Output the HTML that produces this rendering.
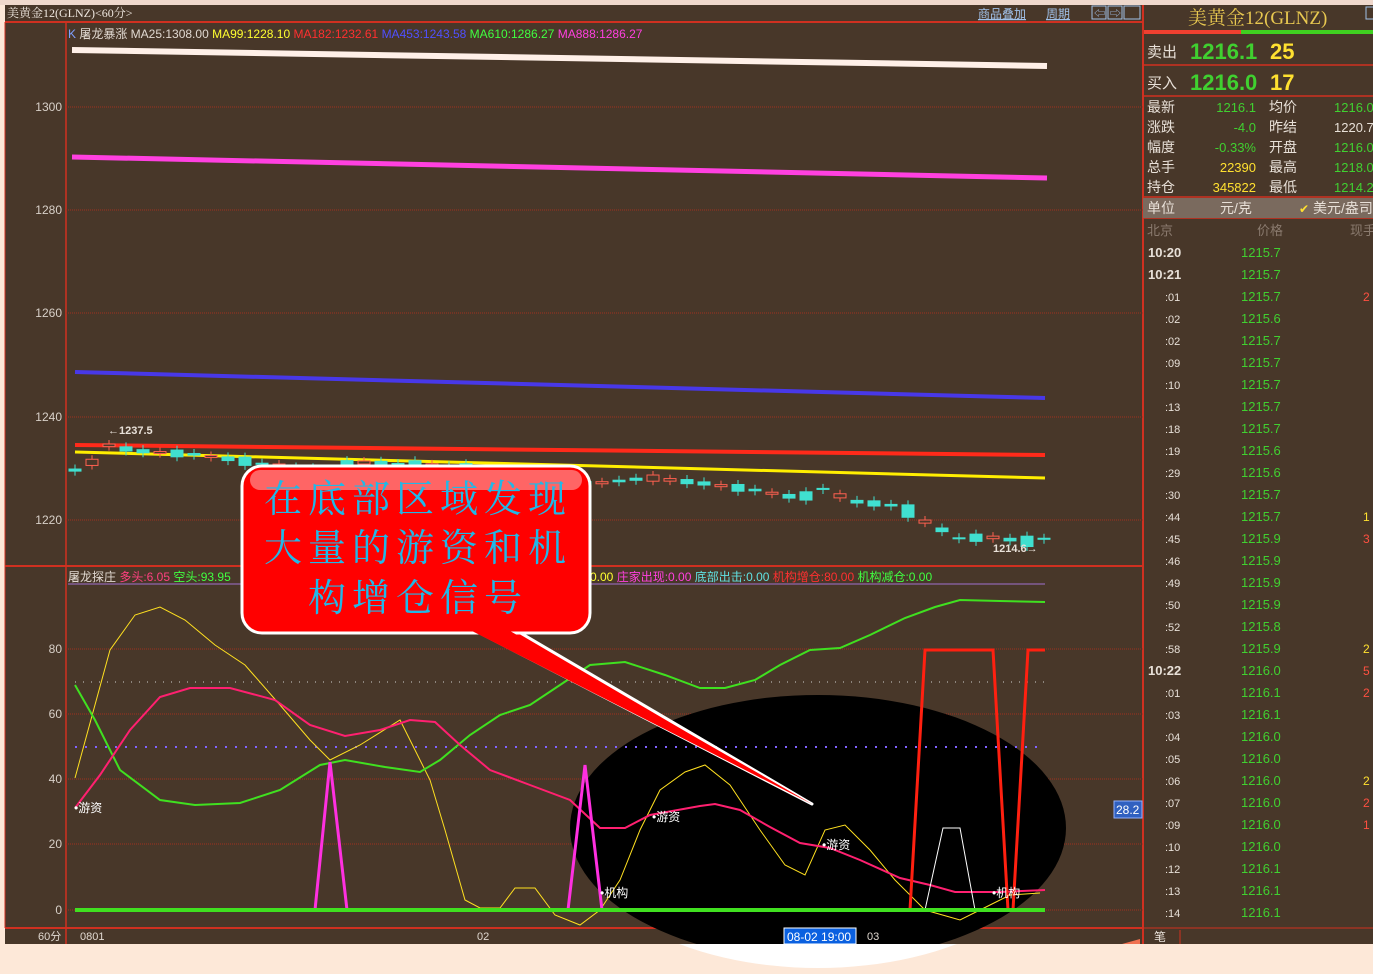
<!DOCTYPE html>
<html><head><meta charset="utf-8">
<style>
html,body{margin:0;padding:0;background:#fde8d8;}
svg{display:block;font-family:"Liberation Sans","Noto Sans CJK SC",sans-serif;}
</style></head>
<body>
<svg id="s" width="1373" height="974" viewBox="0 0 1373 974" xmlns="http://www.w3.org/2000/svg">
<rect width="1373" height="974" fill="#fde8d8"/>
<rect x="0" y="0" width="1373" height="5" fill="#efd8cc"/>
<rect x="5" y="5" width="1368" height="939" fill="#483729"/>
<line x1="5" y1="22" x2="1143" y2="22" stroke="#d03020" stroke-width="2"/>
<line x1="66" y1="22" x2="66" y2="944" stroke="#d03020" stroke-width="1.5"/>
<line x1="1143" y1="5" x2="1143" y2="944" stroke="#d03020" stroke-width="2"/>
<line x1="5" y1="566" x2="1143" y2="566" stroke="#d03020" stroke-width="2"/>
<line x1="5" y1="928" x2="1143" y2="928" stroke="#d03020" stroke-width="2"/>
<line x1="5" y1="22" x2="5" y2="928" stroke="#d03020" stroke-width="1"/>
<text x="7" y="17" font-size="12" fill="#f0e8e0" font-family="Liberation Serif,'Noto Serif CJK SC',serif">美黄金12(GLNZ)&lt;60分&gt;</text>
<g font-size="12" fill="#a0c0e8" text-decoration="underline">
<text x="978" y="18">商品叠加</text><text x="1046" y="18">周期</text></g>
<g fill="none" stroke="#a0c0e8"><rect x="1092" y="6" width="14" height="13"/><rect x="1108" y="6" width="14" height="13"/><rect x="1124" y="6" width="16" height="13"/></g>
<g font-size="11" fill="#a0c0e8"><text x="1094" y="17">⇦</text><text x="1110" y="17">⇨</text></g>
<g font-size="12"><text x="68" y="38"><tspan fill="#80a0ff">K</tspan><tspan fill="#e0d8d0">  屠龙暴涨 MA25:1308.00 </tspan><tspan fill="#ffff30">MA99:1228.10 </tspan><tspan fill="#ff3030">MA182:1232.61 </tspan><tspan fill="#5050ff">MA453:1243.58 </tspan><tspan fill="#40ff40">MA610:1286.27 </tspan><tspan fill="#ff40e0">MA888:1286.27</tspan></text></g>
<g stroke="#a03020" stroke-width="1" stroke-dasharray="1,1">
<line x1="66" y1="107" x2="1143" y2="107"/><line x1="66" y1="210" x2="1143" y2="210"/><line x1="66" y1="313" x2="1143" y2="313"/><line x1="66" y1="417" x2="1143" y2="417"/><line x1="66" y1="520" x2="1143" y2="520"/>
<line x1="66" y1="649" x2="1143" y2="649"/><line x1="66" y1="714" x2="1143" y2="714"/><line x1="66" y1="779" x2="1143" y2="779"/><line x1="66" y1="844" x2="1143" y2="844"/><line x1="66" y1="910" x2="1143" y2="910"/>
</g>
<g font-size="12" fill="#d8d0c8" text-anchor="end">
<text x="62" y="111">1300</text><text x="62" y="214">1280</text><text x="62" y="317">1260</text><text x="62" y="421">1240</text><text x="62" y="524">1220</text>
<text x="62" y="653">80</text><text x="62" y="718">60</text><text x="62" y="783">40</text><text x="62" y="848">20</text><text x="62" y="914">0</text>
</g>
<line x1="72" y1="50" x2="1047" y2="66" stroke="#fff0e8" stroke-width="6"/>
<line x1="72" y1="157" x2="1047" y2="178" stroke="#ff40e0" stroke-width="5"/>
<line x1="75" y1="372" x2="1045" y2="398" stroke="#4838e8" stroke-width="4"/>
<line x1="75" y1="445" x2="1045" y2="455" stroke="#ff2a1a" stroke-width="4"/>
<line x1="75" y1="452" x2="1045" y2="478" stroke="#ffee00" stroke-width="3"/>
<g id="candles"></g>
<text x="108" y="434" font-size="11" font-weight="bold" fill="#e8e0d8">←1237.5</text>
<text x="993" y="552" font-size="11" font-weight="bold" fill="#e8e0d8">1214.6→</text>
<g font-size="12"><text x="68" y="581"><tspan fill="#e0d8d0">屠龙探庄 </tspan><tspan fill="#ff4080">多头:6.05 </tspan><tspan fill="#40ff40">空头:93.95</tspan></text>
<text x="590" y="581"><tspan fill="#ffff30">0.00 </tspan><tspan fill="#ff40e0">庄家出现:0.00 </tspan><tspan fill="#60e0e0">底部出击:0.00 </tspan><tspan fill="#ff3030">机构增仓:80.00 </tspan><tspan fill="#40ff40">机构减仓:0.00</tspan></text></g>
<line x1="68" y1="584" x2="1045" y2="584" stroke="#a070d0" stroke-width="1"/>
<defs><clipPath id="cp"><rect x="0" y="0" width="1373" height="944"/></clipPath>
<clipPath id="cp2"><rect x="0" y="944" width="1373" height="30"/></clipPath></defs>
<ellipse cx="818" cy="828" rx="248" ry="133" fill="#000" clip-path="url(#cp)"/>
<ellipse cx="818" cy="828" rx="248" ry="140" fill="#fff" clip-path="url(#cp2)"/>
<line x1="75" y1="682" x2="1045" y2="682" stroke="#d0d0d0" stroke-width="1" stroke-dasharray="1,7"/>
<line x1="75" y1="747" x2="1045" y2="747" stroke="#8060ff" stroke-width="2" stroke-dasharray="2,8"/>
<polyline fill="none" stroke="#ffe020" stroke-width="1" points="75,778 110,650 135,615 160,607 185,620 215,645 245,665 280,705 310,740 330,760 360,745 400,720 430,780 445,830 465,900 480,908 500,908 515,888 535,888 555,915 580,925 600,910 620,880 640,830 660,790 685,772 705,765 730,785 760,830 785,865 805,875 825,830 845,825 870,850 895,880 925,910 960,920 990,905 1010,895 1040,893"/>
<polyline fill="none" stroke="#40e020" stroke-width="2" points="75,685 95,720 120,770 160,800 195,805 240,803 280,790 320,765 345,760 385,767 420,772 440,760 470,735 500,715 530,705 560,685 590,665 625,662 665,675 700,688 725,688 755,680 780,665 810,650 840,648 870,635 905,618 935,607 960,600 1000,601 1045,602"/>
<polyline fill="none" stroke="#ff2070" stroke-width="2" points="75,808 100,775 130,730 160,697 190,688 230,688 275,700 310,725 345,736 380,730 410,720 435,722 460,745 490,770 530,785 570,800 600,828 625,828 650,815 700,806 715,804 740,810 770,827 800,843 830,848 860,860 900,878 930,885 955,892 1000,892 1045,890"/>
<polyline fill="none" stroke="#ff30e0" stroke-width="3" points="315,910 330,762 347,910"/>
<polyline fill="none" stroke="#ff30e0" stroke-width="3" points="568,910 585,765 602,910"/>
<polyline fill="none" stroke="#ffffff" stroke-width="1" points="925,910 943,828 960,828 975,910"/>
<polyline fill="none" stroke="#ff2010" stroke-width="3" points="910,910 925,650 993,650 1008,910 1013,910 1028,650 1045,650"/>
<line x1="75" y1="910" x2="1045" y2="910" stroke="#40e020" stroke-width="4"/>
<g font-size="12" fill="#fff"><text x="74" y="812">•游资</text><text x="652" y="821">•游资</text><text x="822" y="849">•游资</text><text x="600" y="897">•机构</text><text x="992" y="897">•机构</text></g>
<rect x="1114" y="801" width="28" height="17" fill="#3060c0" stroke="#90b0ff"/>
<text x="1116" y="814" font-size="12" fill="#fff">28.2</text>
<polygon points="470,628 512,628 812,804" fill="#ff0000" stroke="#fff" stroke-width="3" stroke-linejoin="round"/>
<rect x="242" y="466" width="348" height="167" rx="20" fill="#ff0000" stroke="#fff" stroke-width="3"/>
<rect x="250" y="470" width="332" height="20" rx="10" fill="#ff9090" opacity="0.7"/>
<polygon points="472,631 510,631 812,804" fill="#ff0000"/>
<g font-size="38" fill="#20b8e8" text-anchor="middle" font-family="'Noto Serif CJK SC',serif" letter-spacing="6">
<text x="418" y="512">在底部区域发现</text><text x="418" y="561">大量的游资和机</text><text x="418" y="611">构增仓信号</text></g>
<g font-size="11" fill="#e0d8d0"><text x="38" y="940">60分</text><text x="80" y="940">0801</text><text x="477" y="940">02</text><text x="867" y="940">03</text></g>
<rect x="784" y="928" width="72" height="16" fill="#0a60e0" stroke="#fff"/>
<text x="787" y="941" font-size="12" fill="#fff">08-02 19:00</text>
<text x="1188" y="24" font-size="19" fill="#e8c850" font-family="Liberation Serif,'Noto Serif CJK SC',serif">美黄金12(GLNZ)</text>
<rect x="1366" y="7" width="8" height="12" fill="none" stroke="#a0c0e8"/>
<rect x="1144" y="30" width="97" height="4" fill="#f04030"/><rect x="1241" y="30" width="132" height="4" fill="#40d020"/>
<g stroke="#d03020" stroke-width="1.5"><line x1="1143" y1="65" x2="1373" y2="65"/><line x1="1143" y1="96" x2="1373" y2="96"/><line x1="1143" y1="197" x2="1373" y2="197"/><line x1="1143" y1="218" x2="1373" y2="218"/></g>
<rect x="1143" y="198" width="230" height="20" fill="#7a6a5e"/>
<g font-size="15" fill="#e8e0d8"><text x="1147" y="57">卖出</text><text x="1147" y="88">买入</text></g>
<g font-size="22" font-weight="bold"><text x="1190" y="59" fill="#40d030">1216.1</text><text x="1270" y="59" fill="#ffe030">25</text><text x="1190" y="90" fill="#40d030">1216.0</text><text x="1270" y="90" fill="#ffe030">17</text></g>
<g font-size="14" fill="#e8e0d8"><text x="1147" y="112">最新</text><text x="1147" y="132">涨跌</text><text x="1147" y="152">幅度</text><text x="1147" y="172">总手</text><text x="1147" y="192">持仓</text>
<text x="1269" y="112">均价</text><text x="1269" y="132">昨结</text><text x="1269" y="152">开盘</text><text x="1269" y="172">最高</text><text x="1269" y="192">最低</text></g>
<g font-size="13" text-anchor="end"><text x="1256" y="112" fill="#40d030">1216.1</text><text x="1256" y="132" fill="#40d030">-4.0</text><text x="1256" y="152" fill="#40d030">-0.33%</text><text x="1256" y="172" fill="#ffe030">22390</text><text x="1256" y="192" fill="#ffe030">345822</text></g>
<g font-size="13"><text x="1334" y="112" fill="#40d030">1216.0</text><text x="1334" y="132" fill="#e8e0d8">1220.7</text><text x="1334" y="152" fill="#40d030">1216.0</text><text x="1334" y="172" fill="#40d030">1218.0</text><text x="1334" y="192" fill="#40d030">1214.2</text></g>
<g font-size="14" fill="#e8e0d8"><text x="1147" y="213">单位</text><text x="1220" y="213">元/克</text><text x="1313" y="213">美元/盎司</text></g>
<text x="1299" y="213" font-size="12" fill="#ffe030">✔</text>
<g font-size="13" fill="#8a7a6e"><text x="1147" y="235">北京</text><text x="1257" y="235">价格</text><text x="1350" y="235">现手</text></g>
<g id="ticks"></g>
<line x1="1143" y1="928" x2="1373" y2="928" stroke="#d03020" stroke-width="1"/>
<text x="1154" y="941" font-size="12" fill="#e8e0d8">笔</text>
<line x1="1180" y1="930" x2="1180" y2="944" stroke="#d03020"/>
<polygon points="1122,944 1140,944 1140,939" fill="#f07050"/>
</svg>
<script>
var NS="http://www.w3.org/2000/svg";
function el(p,t,a){var e=document.createElementNS(NS,t);for(var k in a)e.setAttribute(k,a[k]);p.appendChild(e);return e;}
var kp=[[75,1229.5],[92,1231],[110,1234.5],[128,1233.5],[150,1233],[200,1232.5],[270,1230.5],[330,1229],[360,1231],[430,1230.5],[500,1229],[560,1226.5],[600,1227],[650,1228],[700,1227],[760,1225.5],[800,1224],[825,1226],[850,1223.5],[900,1222.5],[925,1219.5],[960,1216.2],[990,1216.5],[1010,1216],[1030,1215.6],[1045,1216.2]];
function price(x){for(var i=1;i<kp.length;i++){if(x<=kp[i][0]){var a=kp[i-1],b=kp[i];return a[1]+(b[1]-a[1])*(x-a[0])/(b[0]-a[0]);}}return kp[kp.length-1][1];}
function Y(p){return 107+(1300-p)*5.15;}
var d=[0.6,-1.2,-0.5,1.0,0.8,-0.4,1.5,0.5,-0.3,0.9,1.8,0.4,-0.8,0.7,1.2,0.5,2.6,-0.6,0.9,0.3,1.6,-0.5,0.7,2.2,0.4,0.8,-1.0,1.4,0.6,0.9,1.1,-0.4,0.5];
var g=document.getElementById('candles');var i=0;
for(var x=75;x<=1045;x+=17,i++){var m=price(x);var dd=d[i%d.length];var o=m+dd/2,c=m-dd/2;var up=c>=o;var y1=Y(Math.max(o,c)),y2=Y(Math.min(o,c));var h=Math.max(2,y2-y1);
el(g,'line',{x1:x,y1:y1-4,x2:x,y2:y1+h+4,stroke:up?'#ff6050':'#40e0d0','stroke-width':1});
if(up)el(g,'rect',{x:x-6,y:y1,width:12,height:h,fill:'#483729',stroke:'#ff6050','stroke-width':1});
else el(g,'rect',{x:x-6.5,y:y1,width:13,height:h,fill:'#40e0d0'});}
var rows=[["10:20","1215.7"],["10:21","1215.7"],[":01","1215.7"],[":02","1215.6"],[":02","1215.7"],[":09","1215.7"],[":10","1215.7"],[":13","1215.7"],[":18","1215.7"],[":19","1215.6"],[":29","1215.6"],[":30","1215.7"],[":44","1215.7"],[":45","1215.9"],[":46","1215.9"],[":49","1215.9"],[":50","1215.9"],[":52","1215.8"],[":58","1215.9"],["10:22","1216.0"],[":01","1216.1"],[":03","1216.1"],[":04","1216.0"],[":05","1216.0"],[":06","1216.0"],[":07","1216.0"],[":09","1216.0"],[":10","1216.0"],[":12","1216.1"],[":13","1216.1"],[":14","1216.1"]];
var tg=document.getElementById('ticks');var rc=["","","2","","","","","","","","","","1","3","","","","","2","5","2","","","","2","2","1","","","",""];
rows.forEach(function(r,i){var y=257+i*22;var big=r[0].length>3;
var t=el(tg,'text',{x:big?1148:1165,y:y,'font-size':big?13:11,fill:'#e8e0d8','font-weight':big?'bold':'normal'});t.textContent=r[0];
var v=el(tg,'text',{x:1241,y:y,'font-size':13,fill:'#40d030'});v.textContent=r[1];
var z=el(tg,'text',{x:1363,y:y,'font-size':12,fill:i%3?'#ff5040':'#ffe030'});z.textContent=rc[i]||"";});
</script>
</body></html>
